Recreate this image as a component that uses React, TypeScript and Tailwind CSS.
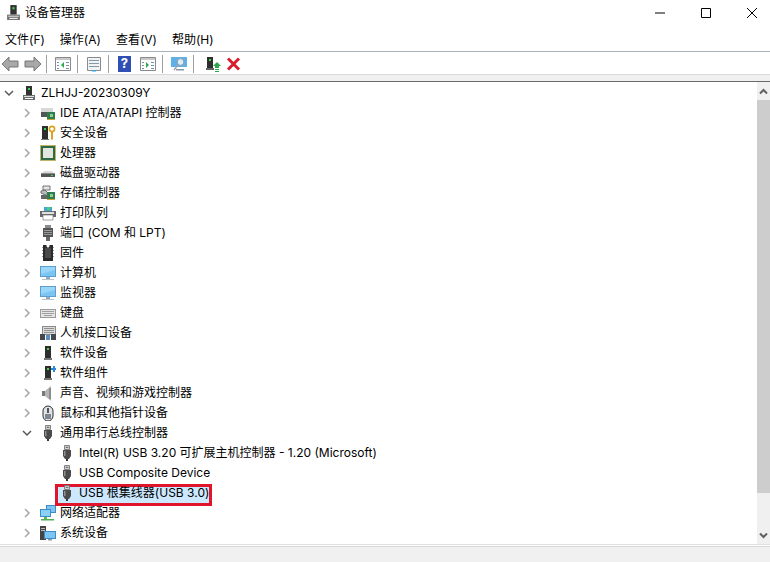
import type { ReactNode } from "react";

const font = { fontFamily: 'Inter, "Noto Sans CJK SC", sans-serif' };

function Chevron({ open }: { open?: boolean }) {
  return (
    <svg width="10" height="10" viewBox="0 0 10 10" fill="none" stroke={open ? "#595959" : "#a6a6a6"} strokeWidth="1.5">
      {open ? <path d="M1 3l4 4 4-4" /> : <path d="M3 1l4 4-4 4" />}
    </svg>
  );
}

function S({ children, w = 16, h = 16 }: { children: ReactNode; w?: number; h?: number }) {
  return (
    <svg width={w} height={h} viewBox="0 0 16 16" className="shrink-0">
      {children}
    </svg>
  );
}

const Tower = () => (
  <>
    <path d="M5 1h6v9H5z" fill="#333" />
    <path d="M7 3h2v2H7z" fill="#3fd24a" />
    <path d="M2 10h12v5H2z" fill="#6b6b6b" />
    <path d="M3 11h10v1H3z" fill="#e0e0e0" />
    <path d="M4 13h8v1H4z" fill="#fff" />
  </>
);

const Chip = () => (
  <>
    <path d="M7 7h8v7H7z" fill="#2f7d4f" />
    <path d="M10 9h3v3h-3z" fill="#8fd08f" />
    <path d="M7 14h8v1H7z" fill="#c9a23a" />
  </>
);

const Monitor = () => (
  <>
    <path d="M0 1h16v11H0z" fill="#5d9fd0" />
    <path d="M1 2h14v9H1z" fill="#7cc4f2" />
    <path d="M1 2h14v3L1 9z" fill="#9ad6f7" />
    <path d="M6 12h4v2H6z" fill="#9ab" />
    <path d="M2 14h12v1H2z" fill="#b8c4cc" />
  </>
);

const UsbPlug = () => (
  <>
    <path d="M5.5.5h5v4h-5z" fill="#d4d4d4" stroke="#6a6a6a" strokeWidth="0.8" />
    <path d="M6.8 1.8h.9v1.2h-.9zM8.4 1.8h.9v1.2h-.9z" fill="#444" />
    <path d="M4 5h8v6l-2 3H6l-2-3z" fill="#4b4b4b" />
    <path d="M5 6h1.5v5H5z" fill="#8f8f8f" />
    <path d="M7 14h2v2H7z" fill="#333" />
  </>
);

const Black = () => (
  <>
    <path d="M5 1h6v12H5z" fill="#2e2e2e" />
    <path d="M7 3h2v2H7z" fill="#3fd24a" />
    <path d="M4 13h8v2H4z" fill="#777" />
  </>
);

const ICONS: Record<string, ReactNode> = {
  tower: <Tower />,
  ide: (
    <>
      <path d="M1 3h12v4H1z" fill="#d8d8d8" />
      <path d="M1 7h6v5H1z" fill="#555" />
      <Chip />
    </>
  ),
  security: (
    <>
      <path d="M2 1h6v13H2z" fill="#2e2e2e" />
      <path d="M4 3h2v2H4z" fill="#3fd24a" />
      <path d="M1 14h8v1H1z" fill="#777" />
      <circle cx="12" cy="4" r="2.6" fill="none" stroke="#d9a520" strokeWidth="1.6" />
      <path d="M11 6h2v8l-1 1-1-1z" fill="#d9a520" />
    </>
  ),
  cpu: (
    <>
      <path d="M0 0h16v16H0z" fill="#c2b26a" />
      <path d="M1 1h14v14H1z" fill="#2f6a44" />
      <path d="M3 3h10v10H3z" fill="#e3e6df" />
    </>
  ),
  disk: (
    <>
      <path d="M2 8l2-2h8l2 2z" fill="#dcdcdc" />
      <path d="M1 8h14v4H1z" fill="#555" />
      <path d="M1 8h14v1H1z" fill="#8a8a8a" />
      <path d="M11 10h2v1h-2z" fill="#3fd24a" />
    </>
  ),
  storage: (
    <>
      <path d="M3 1h7v4H3z" fill="#e6e6e6" stroke="#555" strokeWidth="0.8" />
      <path d="M1 6l4-1 3 3-3 2-4-2z" fill="#bbb" stroke="#555" strokeWidth="0.8" />
      <path d="M1 10h6v4H1z" fill="#666" />
      <Chip />
    </>
  ),
  printer: (
    <>
      <path d="M4 2h8v4H4z" fill="#3fa7d6" />
      <path d="M7 2h3v3H7z" fill="#5ccb6a" />
      <path d="M0 6h16v6H0z" fill="#6a6a6a" />
      <path d="M2 7h12v2H2z" fill="#dfdfdf" />
      <path d="M3 10h10v5H3z" fill="#fff" stroke="#777" strokeWidth="0.7" />
    </>
  ),
  port: (
    <>
      <path d="M5 0h6v3H5z" fill="#8a8a8a" />
      <path d="M3 3h10v9H3z" fill="#555" />
      <path d="M4 5h8v1H4zM4 7h8v1H4zM4 9h8v1H4z" fill="#999" />
      <path d="M6 12h4v4H6z" fill="#666" />
    </>
  ),
  firmware: (
    <>
      <path d="M3 0h10v16H3z" fill="#2b2b2b" />
      <path d="M2 2h1v1H2zM2 5h1v1H2zM2 8h1v1H2zM2 11h1v1H2zM13 2h1v1h-1zM13 5h1v1h-1zM13 8h1v1h-1zM13 11h1v1h-1z" fill="#999" />
      <path d="M5 3h6v10H5z" fill="#4a4a4a" />
      <circle cx="8" cy="1" r="1.5" fill="#fff" />
    </>
  ),
  monitor: <Monitor />,
  keyboard: (
    <>
      <path d="M0 4h16v9H0z" fill="#9a9a9a" />
      <path d="M1 5h14v7H1z" fill="#e4e4e4" />
      <path d="M2 6h12v1H2zM2 8h12v1H2zM4 10h8v1H4z" fill="#9f9f9f" />
    </>
  ),
  hid: (
    <>
      <path d="M2 1h14v9H2z" fill="#8a8a8a" />
      <path d="M3 2h12v7H3z" fill="#dcdcdc" />
      <path d="M4 3h10v1H4zM4 5h10v1H4zM4 7h10v1H4z" fill="#8f8f8f" />
      <path d="M0 9h5v6H0zM11 9h5v6h-5z" fill="#45484e" />
      <path d="M6 10h4v5H6z" fill="#5a8fc4" />
    </>
  ),
  softdev: <Black />,
  softcomp: (
    <>
      <Black />
      <path d="M11 3h2V1h2v2h1v2h-1v2h-2V5h-2z" fill="#2a8ad4" />
    </>
  ),
  sound: (
    <>
      <path d="M2 6h3v5H2z" fill="#777" />
      <path d="M5 6l6-5v15l-6-5z" fill="#b5b5b5" />
      <path d="M9 3h2v11H9z" fill="#8c8c8c" />
    </>
  ),
  mouse: (
    <>
      <rect x="3" y="1" width="10" height="15" rx="5" fill="#dfe3e7" stroke="#2e2e2e" />
      <path d="M7 3h2v5H7z" fill="#555" />
      <path d="M5 9h6v5H5z" fill="#7d8791" />
    </>
  ),
  usb: <UsbPlug />,
  network: (
    <>
      <path d="M6 0h10v8H6z" fill="#3c8ecb" />
      <path d="M7 1h8v6H7z" fill="#7cc4f2" />
      <path d="M0 4h11v8H0z" fill="#3c8ecb" />
      <path d="M1 5h9v6H1z" fill="#8bd0f5" />
      <path d="M4 12h3v2H4z" fill="#5cb85c" />
      <path d="M1 14h13v1.5H1z" fill="#4caf50" />
    </>
  ),
  system: (
    <>
      <path d="M0 1h6v14H0z" fill="#444" />
      <path d="M1 3h4v1H1zM1 5h4v1H1z" fill="#bbb" />
      <path d="M4 6h12v8H4z" fill="#3c8ecb" />
      <path d="M5 7h10v6H5z" fill="#7cc4f2" />
      <path d="M8 14h4v1.5H8z" fill="#8a9aa5" />
    </>
  ),
};

const CATEGORIES: { icon: string; label: string }[] = [
  { icon: "ide", label: "IDE ATA/ATAPI 控制器" },
  { icon: "security", label: "安全设备" },
  { icon: "cpu", label: "处理器" },
  { icon: "disk", label: "磁盘驱动器" },
  { icon: "storage", label: "存储控制器" },
  { icon: "printer", label: "打印队列" },
  { icon: "port", label: "端口 (COM 和 LPT)" },
  { icon: "firmware", label: "固件" },
  { icon: "monitor", label: "计算机" },
  { icon: "monitor", label: "监视器" },
  { icon: "keyboard", label: "键盘" },
  { icon: "hid", label: "人机接口设备" },
  { icon: "softdev", label: "软件设备" },
  { icon: "softcomp", label: "软件组件" },
  { icon: "sound", label: "声音、视频和游戏控制器" },
  { icon: "mouse", label: "鼠标和其他指针设备" },
];

function Row({ icon, label, open }: { icon: string; label: string; open?: boolean }) {
  return (
    <div className="flex h-5 items-center pl-[22px]">
      <div className="flex w-[18px] justify-start">
        <Chevron open={open} />
      </div>
      <S>{ICONS[icon]}</S>
      <span className="ml-1 whitespace-nowrap">{label}</span>
    </div>
  );
}

function Child({ label, selected }: { label: string; selected?: boolean }) {
  return (
    <div className="relative flex h-5 items-center pl-[59px]">
      {selected && <div className="absolute top-[1px] left-[55px] h-[22px] w-[157px] border-[3px] border-[#e0142a] bg-[#cce8ff]" />}
      <div className="relative flex items-center">
        <S>{ICONS.usb}</S>
        <span className="ml-1 whitespace-nowrap">{label}</span>
      </div>
    </div>
  );
}

function Sep({ className }: { className: string }) {
  return <div className={`h-[18px] w-px bg-[#a0a0a0] ${className}`} />;
}

function Arrow({ dir }: { dir: "l" | "r" }) {
  return (
    <svg width="18" height="16" viewBox="0 0 18 16">
      <path
        d={dir === "l" ? "M1 8l7-7v4h9v6H8v4z" : "M17 8l-7-7v4H1v6h9v4z"}
        fill="#a8a8a8"
        stroke="#777"
      />
    </svg>
  );
}

function PaneIcon({ arrow, color }: { arrow: "l" | "r"; color: string }) {
  return (
    <svg width="16" height="14" viewBox="0 0 16 14">
      <path d="M.5.5h15v13H.5z" fill="#fff" stroke="#8a8a8a" />
      <path d="M1 1h14v2H1z" fill="#c8c8c8" />
      <path d="M2 5h2v1H2zM2 8h2v1H2zM2 11h2v1H2zM11 5h3v1h-3zM11 8h3v1h-3zM11 11h3v1h-3z" fill="#6f93ad" />
      <path d={arrow === "l" ? "M9 5v6L6 8z" : "M6 5v6l3-3z"} fill={color} />
    </svg>
  );
}

export default function App() {
  return (
    <div style={font} className="flex h-[562px] w-[770px] flex-col overflow-hidden bg-white text-xs text-black">
      {/* titlebar */}
      <div className="flex h-[25px] shrink-0 items-center pl-[5px]">
        <S w={17} h={17}>
          <Tower />
        </S>
        <span className="ml-[3px] text-xs">设备管理器</span>
        <div className="ml-auto flex items-center">
          <svg width="12" height="12" viewBox="0 0 12 12" className="mr-[34px]">
            <path d="M1 6h10" stroke="#000" />
          </svg>
          <svg width="12" height="12" viewBox="0 0 12 12" className="mr-[34px]">
            <path d="M1.5 1.5h9v9h-9z" fill="none" stroke="#000" />
          </svg>
          <svg width="12" height="12" viewBox="0 0 12 12" className="mr-[12px]">
            <path d="M1 1l10 10M11 1L1 11" stroke="#000" />
          </svg>
        </div>
      </div>

      {/* menu */}
      <div className="flex h-[27px] shrink-0 items-center gap-[15px] border-b border-[#a9b0b8] pt-[4px] pl-[5px]">
        <span>文件(F)</span>
        <span>操作(A)</span>
        <span>查看(V)</span>
        <span>帮助(H)</span>
      </div>

      {/* toolbar */}
      <div className="flex h-[23px] shrink-0 items-center border-b border-[#d9d9d9] pt-[1px] pl-[1px]">
        <Arrow dir="l" />
        <div className="ml-[5px]">
          <Arrow dir="r" />
        </div>
        <Sep className="ml-[4px]" />
        <div className="ml-[8px] flex">
          <PaneIcon arrow="l" color="#2fa84f" />
        </div>
        <Sep className="ml-[6px]" />
        <div className="ml-[8px] flex">
          <svg width="16" height="16" viewBox="0 0 16 16">
            <path d="M1.5 1.5h13v13h-13z" fill="#f2f2f2" stroke="#8a8a8a" />
            <path d="M3 4h10v1H3zM3 7h10v1H3zM3 10h10v1H3z" fill="#7f98ab" />
            <path d="M6 14h4v1.5H6z" fill="#3aa0e0" />
          </svg>
        </div>
        <Sep className="ml-[6px]" />
        <div className="ml-[9px] flex h-4 w-[13px] items-center justify-center bg-[#2f4fb5] text-[13px] leading-none font-bold text-white">?</div>
        <div className="ml-[9px] flex">
          <PaneIcon arrow="r" color="#2fa84f" />
        </div>
        <Sep className="ml-[6px]" />
        <div className="ml-[8px] flex">
          <svg width="16" height="16" viewBox="0 0 16 16">
            <path d="M0 1h16v10H0z" fill="#5fb0e6" />
            <path d="M5 13h8v1.5H5z" fill="#8a9aa5" />
            <circle cx="9.5" cy="6" r="3.4" fill="#d6eefb" stroke="#8c9aa6" />
            <path d="M7 9l-4 5" stroke="#9aa5ae" strokeWidth="1.5" />
          </svg>
        </div>
        <Sep className="ml-[6px]" />
        <div className="ml-[11px] flex">
          <svg width="16" height="16" viewBox="0 0 16 16">
            <path d="M2 1h6v11H2z" fill="#2e2e2e" />
            <path d="M4 3h2v2H4z" fill="#3fd24a" />
            <path d="M1 12h8v2H1z" fill="#666" />
            <path d="M12 6l4 4h-2v2h-4v-2H8z" fill="#2aa84a" />
            <path d="M10 13h4v1h-4zM10 15h4v1h-4z" fill="#2aa84a" />
          </svg>
        </div>
        <div className="ml-[5px] flex">
          <svg width="15" height="14" viewBox="0 0 15 14">
            <path d="M2 1.5l11 11M13 1.5l-11 11" stroke="#d81e2c" strokeWidth="3" />
          </svg>
        </div>
      </div>

      {/* gray band */}
      <div className="h-[7px] shrink-0 border-b border-[#696969] bg-[#f0f0f0]" />

      {/* tree + scrollbar */}
      <div className="flex min-h-0 flex-1">
        <div className="min-w-0 flex-1 overflow-hidden pt-px">
          <div className="flex h-5 items-center pl-[4px]">
            <div className="flex w-[17px]">
              <Chevron open />
            </div>
            <S>{ICONS.tower}</S>
            <span className="ml-1">ZLHJJ-20230309Y</span>
          </div>
          {CATEGORIES.map((c) => (
            <Row key={c.label} icon={c.icon} label={c.label} />
          ))}
          <Row icon="usb" label="通用串行总线控制器" open />
          <Child label="Intel(R) USB 3.20 可扩展主机控制器 - 1.20 (Microsoft)" />
          <Child label="USB Composite Device" />
          <Child label="USB 根集线器(USB 3.0)" selected />
          <Row icon="network" label="网络适配器" />
          <Row icon="system" label="系统设备" />
        </div>
        <div className="flex w-[13px] shrink-0 flex-col bg-[#f0f0f0]">
          <div className="flex h-[18px] items-center justify-center">
            <svg width="9" height="7" viewBox="0 0 9 7" fill="none" stroke="#606060" strokeWidth="2">
              <path d="M1 5.5l3.5-3.5L8 5.5" />
            </svg>
          </div>
          <div className="h-[393px] bg-[#cdcdcd]" />
          <div className="mt-auto flex h-[18px] items-center justify-center">
            <svg width="9" height="7" viewBox="0 0 9 7" fill="none" stroke="#606060" strokeWidth="2">
              <path d="M1 1.5L4.5 5 8 1.5" />
            </svg>
          </div>
        </div>
      </div>

      {/* status */}
      <div className="h-[18px] shrink-0 border-t border-[#e0e0e0] pt-px">
        <div className="h-full border-t border-[#d9d9d9] bg-[#f0f0f0]" />
      </div>
    </div>
  );
}
